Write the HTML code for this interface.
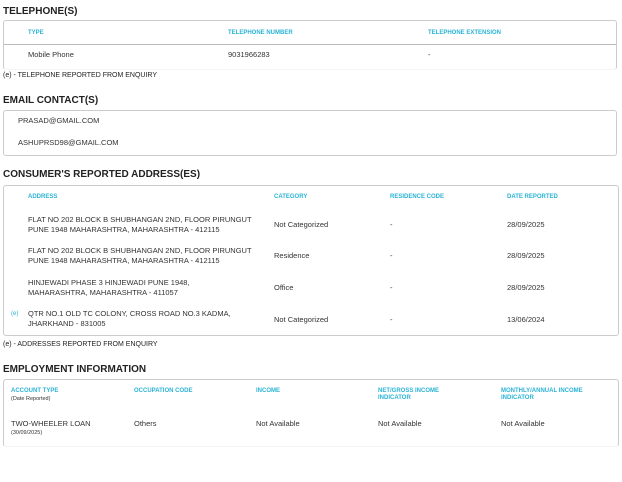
<!DOCTYPE html><html><head><style>
body{margin:0;width:622px;height:482px;background:#fff;font-family:"Liberation Sans",sans-serif;color:#333;position:relative;overflow:hidden}
div,span{position:absolute;white-space:nowrap}
.t{font-weight:bold;font-size:10px;color:#222;left:3px}
.h{font-weight:bold;font-size:6px;color:#2bb3d6;line-height:7px}
.d{font-size:7.5px;color:#333;line-height:10px}
.n{font-size:7px;color:#222;left:3px}
.box{border:1px solid #ccc;border-radius:3px}
</style></head><body>
<div class="t" style="top:6px">TELEPHONE(S)</div>
<div class="box" style="left:3px;top:20px;width:612px;height:48px;border-bottom-color:#f4f4f4"></div>
<div style="left:4px;top:44px;width:612px;height:1px;background:#bbb"></div>
<div class="h" style="left:28px;top:30px">TYPE</div>
<div class="h" style="left:228px;top:30px">TELEPHONE NUMBER</div>
<div class="h" style="left:428px;top:30px">TELEPHONE EXTENSION</div>
<div class="d" style="left:28px;top:50px">Mobile Phone</div>
<div class="d" style="left:228px;top:50px">9031966283</div>
<div class="d" style="left:428px;top:50px">-</div>
<div class="n" style="top:72px">(e) - TELEPHONE REPORTED FROM ENQUIRY</div>
<div class="t" style="top:95px">EMAIL CONTACT(S)</div>
<div class="box" style="left:3px;top:110px;width:612px;height:44px"></div>
<div class="d" style="left:18px;top:116px">PRASAD@GMAIL.COM</div>
<div class="d" style="left:18px;top:138px">ASHUPRSD98@GMAIL.COM</div>
<div class="t" style="top:169px">CONSUMER'S REPORTED ADDRESS(ES)</div>
<div class="box" style="left:3px;top:185px;width:614px;height:149px"></div>
<div class="h" style="left:28px;top:194px">ADDRESS</div>
<div class="h" style="left:274px;top:194px">CATEGORY</div>
<div class="h" style="left:390px;top:194px">RESIDENCE CODE</div>
<div class="h" style="left:507px;top:194px">DATE REPORTED</div>
<div class="d" style="left:28px;top:215px">FLAT NO 202 BLOCK B SHUBHANGAN 2ND, FLOOR PIRUNGUT<br>PUNE 1948 MAHARASHTRA, MAHARASHTRA - 412115</div>
<div class="d" style="left:274px;top:220px">Not Categorized</div><div class="d" style="left:390px;top:220px">-</div><div class="d" style="left:507px;top:220px">28/09/2025</div>
<div class="d" style="left:28px;top:246px">FLAT NO 202 BLOCK B SHUBHANGAN 2ND, FLOOR PIRUNGUT<br>PUNE 1948 MAHARASHTRA, MAHARASHTRA - 412115</div>
<div class="d" style="left:274px;top:251px">Residence</div><div class="d" style="left:390px;top:251px">-</div><div class="d" style="left:507px;top:251px">28/09/2025</div>
<div class="d" style="left:28px;top:278px">HINJEWADI PHASE 3 HINJEWADI PUNE 1948,<br>MAHARASHTRA, MAHARASHTRA - 411057</div>
<div class="d" style="left:274px;top:283px">Office</div><div class="d" style="left:390px;top:283px">-</div><div class="d" style="left:507px;top:283px">28/09/2025</div>
<div class="h" style="left:11px;top:311px;font-weight:normal">(e)</div>
<div class="d" style="left:28px;top:309px">QTR NO.1 OLD TC COLONY, CROSS ROAD NO.3 KADMA,<br>JHARKHAND - 831005</div>
<div class="d" style="left:274px;top:315px">Not Categorized</div><div class="d" style="left:390px;top:315px">-</div><div class="d" style="left:507px;top:315px">13/06/2024</div>
<div class="n" style="top:341px">(e) - ADDRESSES REPORTED FROM ENQUIRY</div>
<div class="t" style="top:364px">EMPLOYMENT INFORMATION</div>
<div class="box" style="left:3px;top:379px;width:614px;height:66px;border-bottom-color:#f4f4f4"></div>
<div class="h" style="left:11px;top:388px">ACCOUNT TYPE</div>
<div style="left:11px;top:396px;font-size:5.5px;color:#333">(Date Reported)</div>
<div class="h" style="left:134px;top:388px">OCCUPATION CODE</div>
<div class="h" style="left:256px;top:388px">INCOME</div>
<div class="h" style="left:378px;top:388px">NET/GROSS INCOME<br>INDICATOR</div>
<div class="h" style="left:501px;top:388px">MONTHLY/ANNUAL INCOME<br>INDICATOR</div>
<div class="d" style="left:11px;top:419px">TWO-WHEELER LOAN</div>
<div style="left:11px;top:430px;font-size:5.5px;color:#333">(30/09/2025)</div>
<div class="d" style="left:134px;top:419px">Others</div>
<div class="d" style="left:256px;top:419px">Not Available</div>
<div class="d" style="left:378px;top:419px">Not Available</div>
<div class="d" style="left:501px;top:419px">Not Available</div>
</body></html>
